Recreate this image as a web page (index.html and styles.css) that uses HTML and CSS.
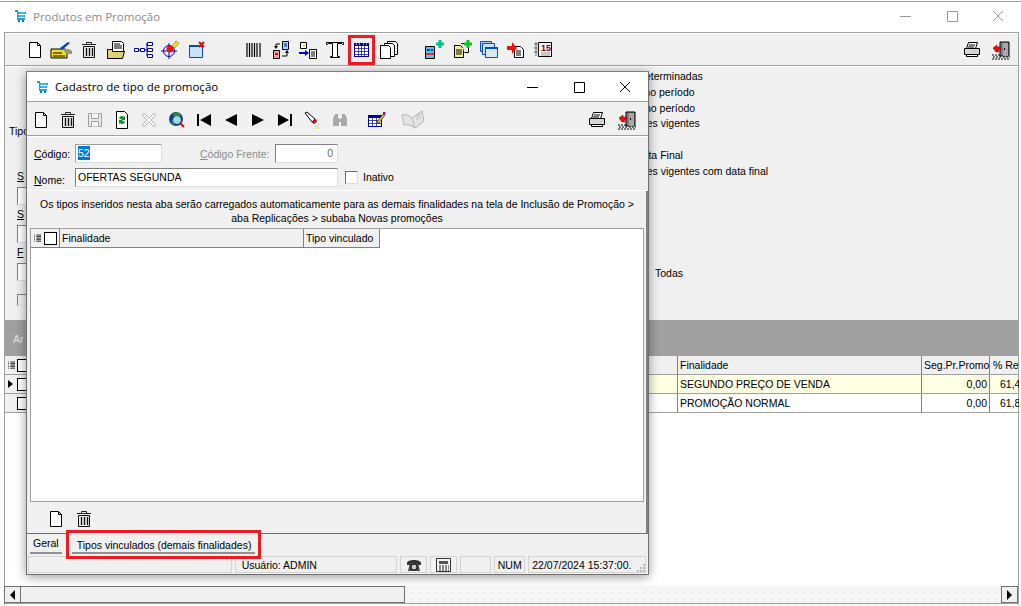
FILE: index.html
```html
<!DOCTYPE html>
<html lang="pt-BR">

<head>
   <meta charset="UTF-8">
   <title>Produtos em Promoção</title>
   <link rel="stylesheet" href="styles.css">
</head>

<body>
   <!-- Icons used more than once -->
   <svg class="defs" width="0" height="0">
      <defs>
         <symbol id="i-cart" viewBox="0 0 11 12">
            <path d="M0 0h3v2h8v2H3v1h7v2H3v1h7v2H2V2H0z" fill="#1b9fd6" />
            <path d="M4 3h6M4 6h5" stroke="#7fd0f0" />
            <rect x="3" y="10" width="2" height="2" fill="#0f7fb0" />
            <rect x="7" y="10" width="2" height="2" fill="#0f7fb0" />
         </symbol>
         <symbol id="i-new" viewBox="0 0 20 20">
            <path d="M4.500 2.500h8l3 3v12h-11z" fill="#fff" stroke="#000" />
            <path d="M12.500 2.500v3h3" fill="none" stroke="#000" />
         </symbol>
         <symbol id="i-trash" viewBox="0 0 20 20">
            <path d="M3 4.500h14M7.500 4V2.500h5V4" fill="none" stroke="#222" />
            <path d="M4.500 6.500h11v11h-11z" fill="#e8e8e8" stroke="#111" />
            <path d="M7.500 8v8M10.500 8v8M13.500 8v8" stroke="#111" stroke-width="1.300" />
         </symbol>
         <symbol id="i-print" viewBox="0 0 20 20">
            <path d="M6.500 2.500h9l-2 6h-9z" fill="#fff" stroke="#000" />
            <path d="M2.500 8.500h15v6h-15z" fill="#d8d8d8" stroke="#000" />
            <path d="M4.500 14.500h11v2h-11z" fill="#fff" stroke="#000" />
            <path d="M7 5h6M6 7h6" stroke="#000" />
            <rect x="11" y="11" width="4" height="1" fill="#e8d020" />
         </symbol>
         <symbol id="i-exit" viewBox="0 0 20 20">
            <path d="M9 2h9v14H9z" fill="#808080" stroke="#000" />
            <path d="M12 3h5v13h-5z" fill="#a8a8a8" />
            <rect x="13" y="8" width="1" height="2" fill="#000" />
            <path d="M2 8l4-3v2h4v3H7l1 2H5z" fill="#e01010" stroke="#800000" stroke-width=".5" />
            <path d="M1 15h9M2 17h9M1 19h11M12 17h7M13 19h6" stroke="#000" stroke-dasharray="2 1" />
         </symbol>
         <symbol id="i-lines" viewBox="0 0 9 11">
            <path d="M0 1h1M3 1h6M0 3h1M3 3h6M0 5h1M3 5h6M0 7h1M3 7h6M0 9h1M3 9h6" stroke="#000" />
         </symbol>
      </defs>
   </svg>

   <div class="window">
      <div class="titlebar main-title">
         <svg class="cart" width="11" height="12"><use href="#i-cart" /></svg>
         <span class="title-text">Produtos em Promoção</span>
         <div class="caption-btns inactive">
            <svg width="46" height="12" viewBox="0 0 46 12"><path d="M17 6.500h11" stroke="currentColor" /></svg>
            <svg width="46" height="12" viewBox="0 0 46 12"><path d="M18.500 1.500h10v10h-10z" fill="none" stroke="currentColor" /></svg>
            <svg width="46" height="12" viewBox="0 0 46 12"><path d="M18 1l10 10M28 1L18 11" stroke="currentColor" /></svg>
         </div>
      </div>

      <div class="client">
         <!-- Main toolbar -->
         <div class="toolbar main-toolbar">
            <span class="tool"><svg width="20" height="20"><use href="#i-new" /></svg></span>
            <span class="tool">
               <svg width="24" height="20" viewBox="0 0 24 20">
                  <path d="M1 9h14l6 2v2h-4v5H1z" fill="#f0e020" stroke="#000" />
                  <path d="M10 8l8-6 2 1-8 7z" fill="#0040c0" />
                  <path d="M13 9h6l3 3v2h-6z" fill="#a09878" />
                  <path d="M3 13h9M3 16h12" stroke="#000" />
               </svg>
            </span>
            <span class="tool"><svg width="20" height="20"><use href="#i-trash" /></svg></span>
            <span class="tool">
               <svg width="20" height="20" viewBox="0 0 20 20">
                  <path d="M6.500 1.500h9l2 2v9h-11z" fill="#fff" stroke="#000" />
                  <path d="M8 4h6M8 6h8M8 8h8" stroke="#000" />
                  <path d="M1.500 9.500h5v2h12l-2 7h-15z" fill="#e0d070" stroke="#000" />
               </svg>
            </span>
            <span class="tool">
               <svg width="20" height="20" viewBox="0 0 20 20" fill="#fff" stroke="#0000a0">
                  <path d="M1.500 8.500h4v3h-4zM7.500 8.500h4v3h-4zM14.500 2.500h5v3h-5zM14.500 8.500h5v3h-5zM14.500 14.500h5v3h-5z" />
                  <path d="M5 10h2M11 10h3M13 4h1v12h1" fill="none" />
               </svg>
            </span>
            <span class="tool">
               <svg width="20" height="20" viewBox="0 0 20 20">
                  <circle cx="9" cy="11" r="5.500" fill="none" stroke="#0000c0" />
                  <path d="M9 3v16M1 11h16" stroke="#0000c0" />
                  <circle cx="10" cy="9" r="3.500" fill="#e81010" />
                  <path d="M12 6l4-5 3 2-4 5z" fill="#f0e020" stroke="#806000" stroke-width=".5" />
               </svg>
            </span>
            <span class="tool">
               <svg width="20" height="20" viewBox="0 0 20 20">
                  <path d="M2.500 6.500h13v11h-13z" fill="#c8e0f8" stroke="#0050b0" />
                  <path d="M2 5h14v2H2z" fill="#0050b0" />
                  <path d="M12 2l5 5M17 2l-5 5" stroke="#e01010" stroke-width="2" />
               </svg>
            </span>

            <span class="tool first-in-group">
               <svg width="16" height="16" viewBox="0 0 16 16">
                  <path d="M1 1v14M3.500 1v14M6 1v14M8.500 1v14M11 1v14M14 1v14" stroke="#000" stroke-width="1.200" />
               </svg>
            </span>
            <span class="tool">
               <svg width="20" height="20" viewBox="0 0 20 20">
                  <path d="M11.500 1.500h6v8h-6z" fill="#9ce4f8" stroke="#000" />
                  <path d="M13 4h3M13 6h3" stroke="#0000c0" />
                  <path d="M2.500 10.500h6v8h-6z" fill="#e8a0a0" stroke="#000" />
                  <path d="M4 14h3" stroke="#e01010" stroke-width="2" />
                  <path d="M9 4H5v3M11 16h5v-4" fill="none" stroke="#000" />
                  <path d="M3 6h4L5 9zM14 13h4l-2-3z" fill="#000" />
               </svg>
            </span>
            <span class="tool">
               <svg width="20" height="20" viewBox="0 0 20 20">
                  <path d="M2.500 2.500h6v6h-6z" fill="#fff" stroke="#000" />
                  <path d="M5 4.500h2v2H5z" fill="#e8d020" />
                  <path d="M1 13h7" stroke="#0000c0" stroke-width="2" />
                  <path d="M7 10l4 3-4 3z" fill="#0000c0" />
                  <path d="M11.500 9.500h7v9h-7z" fill="#fff" stroke="#000" />
                  <path d="M13 12h4M13 14h4M13 16h4" stroke="#000" />
               </svg>
            </span>
            <span class="tool">
               <svg width="20" height="20" viewBox="0 0 20 20">
                  <path d="M1.500 4.500v-2h17v2h-1l-1-1h-4v13h2v1h-9v-1h2v-13h-4l-1 1z" fill="#fff" stroke="#000" />
               </svg>
            </span>
            <span class="tool highlight">
               <svg width="15" height="14" viewBox="0 0 15 14">
                  <rect width="15" height="14" fill="#0000a8" />
                  <path d="M2 1h1M5 1h1M9 1h1M12 1h1" stroke="#fff" />
                  <path d="M1 3h13v10H1z" fill="#fff" />
                  <path d="M1 5.500h13M1 8.500h13M1 11.500h13M4.500 3v10M7.500 3v10M10.500 3v10" stroke="#202080" stroke-width=".8" />
               </svg>
            </span>
            <span class="tool">
               <svg width="20" height="20" viewBox="0 0 20 20">
                  <path d="M8.500 1.500h8l2 2v11h-10z" fill="#f4f4f4" stroke="#000" />
                  <path d="M5.500 3.500h8l2 2v11h-10z" fill="#fff" stroke="#000" />
                  <path d="M1.500 5.500h8l2 2v11h-10z" fill="#fff" stroke="#000" />
               </svg>
            </span>

            <span class="tool second-group">
               <svg width="22" height="20" viewBox="0 0 22 20">
                  <path d="M1.500 6.500h9v12h-9z" fill="#60c0e8" stroke="#000" />
                  <path d="M3 9h3v2H3zM7 9h2v2H7z" fill="#0040c0" />
                  <path d="M2 13h8v2H2z" fill="#e83030" />
                  <path d="M12 4h8M16 0v8" stroke="#00c090" stroke-width="3" />
               </svg>
            </span>
            <span class="tool">
               <svg width="22" height="20" viewBox="0 0 22 20">
                  <path d="M3.500 5.500h6l3 3v9h-9z" fill="#f8f0a0" stroke="#000" />
                  <path d="M5 10h6M5 12h6M5 14h6" stroke="#000" />
                  <path d="M10.500 3.500h7v9h-4" fill="#e8e8e8" stroke="#000" />
                  <path d="M13 4h8M17 0v8" stroke="#10c020" stroke-width="3" />
               </svg>
            </span>
            <span class="tool">
               <svg width="20" height="20" viewBox="0 0 20 20">
                  <path d="M1.500 1.500h11v10h-11z" fill="#a8d0f8" stroke="#0050c0" />
                  <path d="M3.500 3.500h12v11h-12z" fill="#c8e0f8" stroke="#0050c0" />
                  <path d="M6.500 7.500h12v10h-12z" fill="#d8e8fc" stroke="#0050c0" />
                  <path d="M6 7h13v2H6z" fill="#0050c0" />
               </svg>
            </span>
            <span class="tool">
               <svg width="20" height="20" viewBox="0 0 20 20">
                  <path d="M8.500 6.500h6l3 3v8h-9z" fill="#fff" stroke="#000" />
                  <path d="M10 11h5M10 13h5M10 15h5" stroke="#000" />
                  <path d="M1 6h5V2l5 6-5 6v-4H1z" fill="#f01010" />
               </svg>
            </span>
            <span class="tool">
               <svg width="20" height="20" viewBox="0 0 20 20">
                  <path d="M5.500 2.500h13v14h-13z" fill="#f4f4f4" stroke="#000" />
                  <path d="M1 4h5M1 8h5M1 12h5M3 2v14" stroke="#666" />
                  <text x="8" y="11" class="cal-day">15</text>
                  <path d="M8 13h9M8 15h9" stroke="#999" />
               </svg>
            </span>

            <span class="tool push-right"><svg width="20" height="20"><use href="#i-print" /></svg></span>
            <span class="tool exit-tool"><svg width="20" height="20"><use href="#i-exit" /></svg></span>
         </div>

         <!-- Filters behind the dialog -->
         <div class="filters">
            <div class="side">
               <div class="side-label tipo">Tipo</div>
               <div class="side-label"><u>S</u></div>
               <div class="side-box"></div>
               <div class="side-label"><u>S</u></div>
               <div class="side-box"></div>
               <div class="side-label"><u>F</u></div>
               <div class="side-box"></div>
               <div class="side-check"></div>
            </div>
            <div class="options">
               <div class="option"><span class="radio"></span>Com datas finais determinadas</div>
               <div class="option"><span class="radio"></span>Promoções ativas no período</div>
               <div class="option"><span class="radio"></span>Promoções novas no período</div>
               <div class="option tight"><span class="radio"></span>Todas as&nbsp;&nbsp;promoções vigentes</div>
               <div class="option gap"><span class="radio"></span>Promoções com data Final</div>
               <div class="option"><span class="radio"></span>Todas as&nbsp;&nbsp;promoções vigentes com data final</div>
               <div class="option todas">Todas</div>
            </div>
         </div>

         <div class="group-bar">Ar</div>

         <!-- Results grid -->
         <div class="results">
            <div class="res-row res-head">
               <div class="res-ind"><svg width="7" height="9"><use href="#i-lines" /></svg><span class="box"></span></div>
               <div class="res-fill"></div>
               <div class="res-cell">Finalidade</div>
               <div class="res-cell">Seg.Pr.Promo</div>
               <div class="res-cell last">% Re</div>
            </div>
            <div class="res-row selected">
               <div class="res-ind"><span class="arrow"></span><span class="box"></span></div>
               <div class="res-fill"></div>
               <div class="res-cell">SEGUNDO PREÇO DE VENDA</div>
               <div class="res-cell num">0,00</div>
               <div class="res-cell last">61,45</div>
            </div>
            <div class="res-row">
               <div class="res-ind"><span class="arrow blank"></span><span class="box"></span></div>
               <div class="res-fill"></div>
               <div class="res-cell">PROMOÇÃO NORMAL</div>
               <div class="res-cell num">0,00</div>
               <div class="res-cell last">61,80</div>
            </div>
         </div>

         <div class="hscroll">
            <div class="sb-btn"><span class="sb-left"></span></div>
            <div class="sb-thumb"></div>
            <div class="sb-track"></div>
            <div class="sb-btn"><span class="sb-right"></span></div>
         </div>
      </div>

      <!-- Dialog window -->
      <div class="dialog">
         <div class="titlebar dlg-title">
            <svg class="cart" width="11" height="12"><use href="#i-cart" /></svg>
            <span class="title-text">Cadastro de tipo de promoção</span>
            <div class="caption-btns">
               <svg width="46" height="12" viewBox="0 0 46 12"><path d="M17 6.500h11" stroke="currentColor" /></svg>
               <svg width="46" height="12" viewBox="0 0 46 12"><path d="M18.500 1.500h10v10h-10z" fill="none" stroke="currentColor" /></svg>
               <svg width="46" height="12" viewBox="0 0 46 12"><path d="M18 1l10 10M28 1L18 11" stroke="currentColor" /></svg>
            </div>
         </div>

         <div class="toolbar dlg-toolbar">
            <span class="tool"><svg width="20" height="20"><use href="#i-new" /></svg></span>
            <span class="tool"><svg width="20" height="20"><use href="#i-trash" /></svg></span>
            <span class="tool">
               <svg width="16" height="16" viewBox="0 0 16 16" fill="none" stroke="#a0a0a0">
                  <path d="M1.500 1.500h13v13h-13z" fill="#e8e8e8" />
                  <path d="M4.500 1.500v5h7v-5M4.500 14.500v-5h7v5" fill="#f4f4f4" />
               </svg>
            </span>
            <span class="tool">
               <svg width="20" height="20" viewBox="0 0 20 20">
                  <path d="M4.500 1.500h8l3 3v14h-11z" fill="#fff" stroke="#000" />
                  <path d="M7 8a3 3 0 0 1 5-1l1-1v4h-4l1-1a2 2 0 0 0-2 0zM13 12a3 3 0 0 1-5 1l-1 1v-4h4l-1 1a2 2 0 0 0 2 0z" fill="#109030" />
               </svg>
            </span>
            <span class="tool">
               <svg width="16" height="16" viewBox="0 0 16 16">
                  <path d="M1 3l2-2 5 5 5-5 2 2-5 5 5 5-2 2-5-5-5 5-2-2 5-5z" fill="#f0f0f0" stroke="#b8b8b8" />
               </svg>
            </span>
            <span class="tool">
               <svg width="18" height="18" viewBox="0 0 18 18">
                  <circle cx="8" cy="8" r="7" fill="#104090" />
                  <path d="M4 3l5-2 4 3-2 3-4-1zM3 9l3 1 1 4-3-1z" fill="#209040" />
                  <circle cx="9" cy="9" r="3.500" fill="#90e0f8" stroke="#c0c0c0" />
                  <path d="M12 12l4 4" stroke="#d01010" stroke-width="2" />
               </svg>
            </span>
            <span class="tool">
               <svg width="14" height="12" viewBox="0 0 14 12"><path d="M0 0h2v12H0zM14 0v12L3 6z" /></svg>
            </span>
            <span class="tool">
               <svg width="12" height="12" viewBox="0 0 12 12"><path d="M12 0v12L0 6z" /></svg>
            </span>
            <span class="tool">
               <svg width="12" height="12" viewBox="0 0 12 12"><path d="M0 0v12l12-6z" /></svg>
            </span>
            <span class="tool">
               <svg width="14" height="12" viewBox="0 0 14 12"><path d="M14 0h-2v12h2zM0 0v12l11-6z" /></svg>
            </span>
            <span class="tool">
               <svg width="18" height="18" viewBox="0 0 18 18">
                  <path d="M2 2l2-1 8 7-3 3z" fill="#fff" stroke="#000" />
                  <path d="M9 11l3-3 2 2-3 3z" fill="#e01010" stroke="#800000" stroke-width=".5" />
                  <path d="M12 15h1M14 15h1M13 17h1M15 17h1M15 13h1" stroke="#d8c820" />
               </svg>
            </span>
            <span class="tool">
               <svg width="16" height="16" viewBox="0 0 16 16" fill="#a8a8a8">
                  <path d="M3 2h3v4h1v8H1V7zM10 2h3l2 5v7H9V6h1z" />
                  <rect x="6" y="7" width="4" height="3" />
               </svg>
            </span>
            <span class="tool edit-table">
               <svg width="18" height="16" viewBox="0 0 18 16">
                  <rect x="0" y="3" width="14" height="12" fill="#0000a8" />
                  <path d="M1 6h12v8H1z" fill="#fff" />
                  <path d="M1 8.500h12M1 11.500h12M4.500 6v8M8.500 6v8" stroke="#202080" stroke-width=".8" />
                  <path d="M9 10l6-8 2 1-6 8z" fill="#f0d820" stroke="#000" stroke-width=".6" />
                  <rect x="15" y="0" width="2.500" height="2.500" fill="#a01080" />
               </svg>
            </span>
            <span class="tool book">
               <svg width="24" height="20" viewBox="0 0 24 20">
                  <path d="M1 5c4-1 7 0 10 3l10-7 2 10-9 7C10 15 6 14 3 15z" fill="#e4e4e4" stroke="#b0b0b0" />
                  <path d="M11 8l3 10M15 7l5-3M15 10l5-3" stroke="#b8b8b8" fill="none" />
               </svg>
            </span>
            <span class="tool push-right"><svg width="20" height="20"><use href="#i-print" /></svg></span>
            <span class="tool exit-tool"><svg width="20" height="20"><use href="#i-exit" /></svg></span>
         </div>

         <div class="dlg-form">
            <div class="form-row">
               <label class="form-label"><u>C</u>ódigo:</label>
               <div class="field code-field"><span class="sel">52</span></div>
               <label class="form-label disabled front-label"><u>C</u>ódigo Frente:</label>
               <div class="field front-field">0</div>
            </div>
            <div class="form-row">
               <label class="form-label name-label"><u>N</u>ome:</label>
               <div class="field name-field">OFERTAS SEGUNDA</div>
               <span class="check"></span>
               <label class="check-label">Inativo</label>
            </div>
         </div>

         <div class="panel">
            <p class="note">Os tipos inseridos nesta aba serão carregados automaticamente para as demais finalidades na tela de Inclusão de Promoção &gt;<br>aba Replicações &gt; subaba Novas promoções</p>
            <div class="dgrid">
               <div class="dgrid-head">
                  <div class="dcell dcell-ind"><svg width="7" height="9"><use href="#i-lines" /></svg><span class="box"></span></div>
                  <div class="dcell dcell-fin">Finalidade</div>
                  <div class="dcell dcell-tipo">Tipo vinculado</div>
               </div>
            </div>
            <div class="grid-tools">
               <span class="tool"><svg width="20" height="20"><use href="#i-new" /></svg></span>
               <span class="tool"><svg width="20" height="20"><use href="#i-trash" /></svg></span>
            </div>
         </div>

         <div class="tabs">
            <div class="tab">Geral</div>
            <div class="tab-mark"><div class="tab active">Tipos vinculados (demais finalidades)</div></div>
         </div>

         <div class="statusbar">
            <div class="st st-blank"></div>
            <div class="st st-user">Usuário: ADMIN</div>
            <div class="st st-icon">
               <svg width="16" height="14" viewBox="0 0 16 14">
                  <path d="M1 5C1 1 15 1 15 5v2h-3V5H4v2H1z" fill="#333" />
                  <path d="M4 5h8l2 8H2z" fill="#444" />
                  <circle cx="8" cy="9" r="3" fill="#c8c8c8" stroke="#111" />
               </svg>
            </div>
            <div class="st st-icon">
               <svg width="15" height="14" viewBox="0 0 15 14">
                  <path d="M.5.500h14v13H.5z" fill="#f4f4f4" stroke="#333" />
                  <path d="M3 3h9v3H3z" fill="#555" />
                  <path d="M3 8h2M6 8h2M9 8h2M12 8h1M3 10h2M6 10h2M9 10h2M12 10h1M3 12h2M6 12h2M9 12h2M12 12h1" stroke="#222" />
               </svg>
            </div>
            <div class="st st-empty"></div>
            <div class="st st-num">NUM</div>
            <div class="st st-date">22/07/2024 15:37:00.
               <svg class="grip" width="8" height="8" viewBox="0 0 8 8">
                  <path d="M6 0h2v2H6zM3 3h2v2H3zM6 3h2v2H6zM0 6h2v2H0zM3 6h2v2H3zM6 6h2v2H6z" fill="#b8b8b8" />
               </svg>
            </div>
         </div>
      </div>
   </div>
</body>

</html>
```

FILE: styles.css
```css
* {
   box-sizing: border-box;
}

html,
body {
   margin: 0;
   height: 606px;
   overflow: hidden;
   background-color: #fff;
}

body {
   font-family: "Liberation Sans", Arial, sans-serif;
   font-size: 10.5px;
   color: #000;
}

.defs {
   position: absolute;
}

svg {
   display: block;
   flex: none;
}

.cal-day {
   font-size: 9px;
   font-weight: bold;
   fill: #800000;
}

/* Outer window */
.window {
   position: relative;
   height: 606px;
   padding-top: 1px;
}

.titlebar {
   display: flex;
   align-items: center;
   height: 31px;
   padding-left: 15px;
   border-top: 1px solid #a0a0a0;
   background-color: #fff;
}

.main-title {
   padding-bottom: 2px;
}

.title-text {
   margin-left: 7px;
   font-family: "Open Sans", sans-serif;
   font-size: 11.5px;
   color: #8c8c8c;
}

.caption-btns {
   display: flex;
   margin-left: auto;
   color: #000;
}

.caption-btns.inactive {
   color: #999;
}

.client {
   margin: 0 2px 0 4px;
   border-left: 1px solid #a0a0a0;
   border-right: 1px solid #a0a0a0;
   height: 573px;
   border-top: 1px solid #a0a0a0;
}

/* Toolbars */
.toolbar {
   display: flex;
   align-items: center;
   background-color: #f0f0f0;
   border-bottom: 1px solid #a0a0a0;
}

.main-toolbar {
   height: 32px;
   padding-left: 16px;
   padding-right: 2px;
   margin-top: 1px;
}

.tool {
   display: flex;
   align-items: center;
   justify-content: center;
   width: 27px;
   height: 30px;
   flex: none;
}

.highlight {
   border: 3px solid #ed1c24;
}

.first-in-group {
   margin-left: 30px;
}

.second-group {
   margin-left: 19px;
}

.push-right {
   margin-left: auto;
}

.exit-tool {
   width: 31px;
}

/* Filters area */
.filters {
   display: flex;
   height: 254px;
   border-top: 1px solid #fff;
   background-color: #f0f0f0;
}

.side {
   width: 100px;
   padding-top: 57px;
   padding-left: 12px;
   flex: none;
}

.side-label {
   height: 15px;
   line-height: 14px;
   white-space: nowrap;
}

.side-label.tipo {
   margin-left: -8px;
   margin-bottom: 30px;
}

.side-box {
   width: 60px;
   height: 18px;
   margin: 3px 0 2px;
   border: 1px solid;
   border-color: #808080 #e0e0e0 #e0e0e0 #808080;
   background-color: #fff;
}

.side-check {
   width: 11px;
   height: 12px;
   margin-top: 13px;
   border: 1px solid;
   border-color: #808080 #e0e0e0 #e0e0e0 #808080;
}

.options {
   margin-left: 438px;
   padding-top: 1px;
}

.option {
   display: flex;
   align-items: center;
   height: 16px;
   line-height: 16px;
   white-space: nowrap;
}

.option.tight {
   margin-top: -1px;
}

.option.gap {
   margin-top: 16px;
}

.option.todas {
   margin-top: 86px;
   margin-left: 112px;
}

.radio {
   width: 11px;
   height: 11px;
   margin-right: 4px;
   border: 1px solid #808080;
   border-radius: 50%;
   background-color: #fff;
}

/* Dark band above the results grid */
.group-bar {
   height: 36px;
   padding-left: 8px;
   line-height: 38px;
   color: #e4e4e4;
   background-color: #a0a0a0;
}

/* Results grid */
.results {
   height: 230px;
   background-color: #fff;
}

.res-row {
   display: grid;
   grid-template-columns: 30px 642px 244px 68px 30px;
   height: 19px;
   line-height: 18px;
   border-bottom: 1px solid #a0a0a0;
   background-color: #fff;
}

.res-head {
   background-color: #f0f0f0;
   border-bottom: 1px solid #a0a0a0;
}

.res-row.selected {
   background-color: #ffffe3;
}

.res-ind {
   display: flex;
   align-items: center;
   padding-left: 3px;
   gap: 4px;
   background-color: #f0f0f0;
}

.res-head .res-ind {
   gap: 2px;
}

.res-cell {
   padding-left: 2px;
   overflow: hidden;
   white-space: nowrap;
   border-left: 1px solid #808080;
}

.res-row .last {
   padding-left: 3px;
}

.res-row:not(.res-head) .last {
   padding-left: 10px;
}

.res-cell.num {
   padding-right: 2px;
   text-align: right;
}

.box {
   display: block;
   width: 13px;
   height: 13px;
   flex: none;
   border: 1px solid #000;
   background-color: #fff;
}

.arrow {
   width: 0;
   height: 0;
   border-left: 5px solid #000;
   border-top: 4px solid transparent;
   border-bottom: 4px solid transparent;
}

.arrow.blank {
   border-left-color: transparent;
}

/* Bottom scrollbar */
.hscroll {
   display: flex;
   height: 18px;
   margin-left: -1px;
   border-bottom: 1px solid #a0a0a0;
}

.sb-btn {
   display: flex;
   align-items: center;
   justify-content: center;
   width: 17px;
   flex: none;
   border: 1px solid #707070;
   background-color: #f0f0f0;
}

.sb-left {
   border-right: 5px solid #000;
   border-top: 5px solid transparent;
   border-bottom: 5px solid transparent;
}

.sb-right {
   border-left: 5px solid #000;
   border-top: 5px solid transparent;
   border-bottom: 5px solid transparent;
}

.sb-thumb {
   width: 384px;
   flex: none;
   border: 1px solid #707070;
   border-left: 0;
   background-color: #f0f0f0;
}

.sb-track {
   flex: 1;
   background-image: repeating-conic-gradient(#ececec 0 25%, #fff 0 50%);
   background-size: 2px 2px;
}

/* Dialog window, floats over the main window */
.dialog {
   position: absolute;
   left: 26px;
   top: 71px;
   width: 623px;
   height: 504px;
   display: flex;
   flex-direction: column;
   border: 1px solid #707070;
   border-top-color: #808080;
   background-color: #f0f0f0;
   box-shadow: 0 2px 10px rgba(0, 0, 0, 0.4);
}

.dlg-title {
   height: 30px;
   flex: none;
   padding-left: 10px;
   border-top: 0;
   border-bottom: 1px solid #a0a0a0;
}

.dlg-title .title-text {
   color: #000;
}

.dlg-toolbar {
   height: 33px;
   flex: none;
   margin-top: 1px;
   padding-top: 2px;
   padding-right: 6px;
}

.dlg-toolbar .tool {
   width: 27.2px;
}

.dlg-toolbar .edit-table {
   margin-left: 10px;
}

.dlg-toolbar .book {
   margin-left: 9px;
}

.dlg-toolbar .exit-tool {
   width: 31px;
}

.dlg-form {
   height: 55px;
   flex: none;
   padding-top: 7px;
   border-top: 1px solid #fff;
   border-bottom: 1px solid #fff;
}

.form-row {
   display: flex;
   align-items: center;
   height: 19px;
   margin-bottom: 5px;
}

.form-label {
   width: 48px;
   padding-left: 7px;
   flex: none;
}

.form-label.disabled {
   color: #8c8c8c;
}

.front-label {
   width: 75px;
   margin-left: 38px;
   padding-left: 0;
}

.name-label {
   padding-top: 4px;
}

.field {
   height: 19px;
   line-height: 16px;
   padding: 0 2px;
   border: 1px solid;
   border-color: #808080 #dcdcdc #dcdcdc #808080;
   background-color: #fff;
   white-space: nowrap;
}

.code-field {
   width: 87px;
   border-color: #a0a0a0 #dcdcdc #dcdcdc #a0a0a0;
}

.sel {
   display: inline-block;
   height: 14px;
   line-height: 14px;
   color: #fff;
   background-color: #0078d7;
}

.front-field {
   width: 63px;
   padding-right: 4px;
   text-align: right;
   color: #6d6d6d;
}

.name-field {
   width: 263px;
}

.check {
   width: 13px;
   height: 13px;
   margin-left: 7px;
   flex: none;
   border: 1px solid;
   border-color: #707070 #dcdcdc #dcdcdc #707070;
   background-color: #fff;
}

.check-label {
   margin-left: 5px;
   margin-bottom: 1px;
}

/* Panel with the linked types grid */
.panel {
   flex: none;
   height: 343px;
   border-right: 2px solid #808080;
   border-bottom: 1px solid #707070;
   padding: 6px 2px 0 3px;
}

.note {
   margin: 0 0 3px;
   height: 28px;
   line-height: 14px;
   text-align: center;
   white-space: nowrap;
}

.dgrid {
   height: 274px;
   border: 1px solid #a0a0a0;
   background-color: #fff;
}

.dgrid-head {
   display: flex;
   height: 19px;
}

.dcell {
   display: flex;
   align-items: center;
   padding-left: 2px;
   background-color: #f0f0f0;
   border-right: 1px solid #808080;
   border-bottom: 1px solid #808080;
}

.dcell-ind {
   width: 29px;
   gap: 3px;
   padding-left: 3px;
}

.dcell-fin {
   width: 244px;
}

.dcell-tipo {
   width: 76px;
}

.grid-tools {
   display: flex;
   align-items: center;
   height: 31px;
   padding-left: 12px;
   margin-top: 1px;
}

.grid-tools .tool {
   width: 28px;
}

/* Tabs */
.tabs {
   display: flex;
   align-items: flex-start;
   height: 22px;
   flex: none;
   padding-left: 3px;
}

.tab {
   height: 18px;
   padding: 0 3px;
   margin-top: 2px;
   line-height: 15px;
   white-space: nowrap;
   border-bottom: 2px solid #909090;
}

.tab-mark {
   position: relative;
   z-index: 1;
   width: 195px;
   height: 29px;
   margin-top: -4px;
   margin-left: 4px;
   padding: 0 3px;
   border: 3px solid #ed1c24;
   background-color: #f0f0f0;
}

.tab.active {
   height: 21px;
   margin-top: 0;
   padding-left: 5px;
   padding-top: 3px;
   line-height: 16px;
   background-color: #f0f0f0;
   border-top: 1px solid #fff;
}

/* Status bar */
.statusbar {
   display: flex;
   gap: 3px;
   height: 17px;
   flex: none;
   padding-left: 1px;
   padding-right: 2px;
}

.st {
   display: flex;
   align-items: center;
   justify-content: center;
   height: 17px;
   border: 1px solid #d4d4d4;
   white-space: nowrap;
}

.st-blank {
   width: 204px;
}

.st-user {
   width: 163px;
   justify-content: flex-start;
   padding-left: 6px;
}

.st-icon {
   width: 27px;
}

.st-empty {
   width: 31px;
}

.st-num {
   width: 31px;
}

.st-date {
   width: 118px;
   justify-content: flex-start;
   padding-left: 3px;
}

.grip {
   margin-left: auto;
   margin-top: 6px;
}
```
